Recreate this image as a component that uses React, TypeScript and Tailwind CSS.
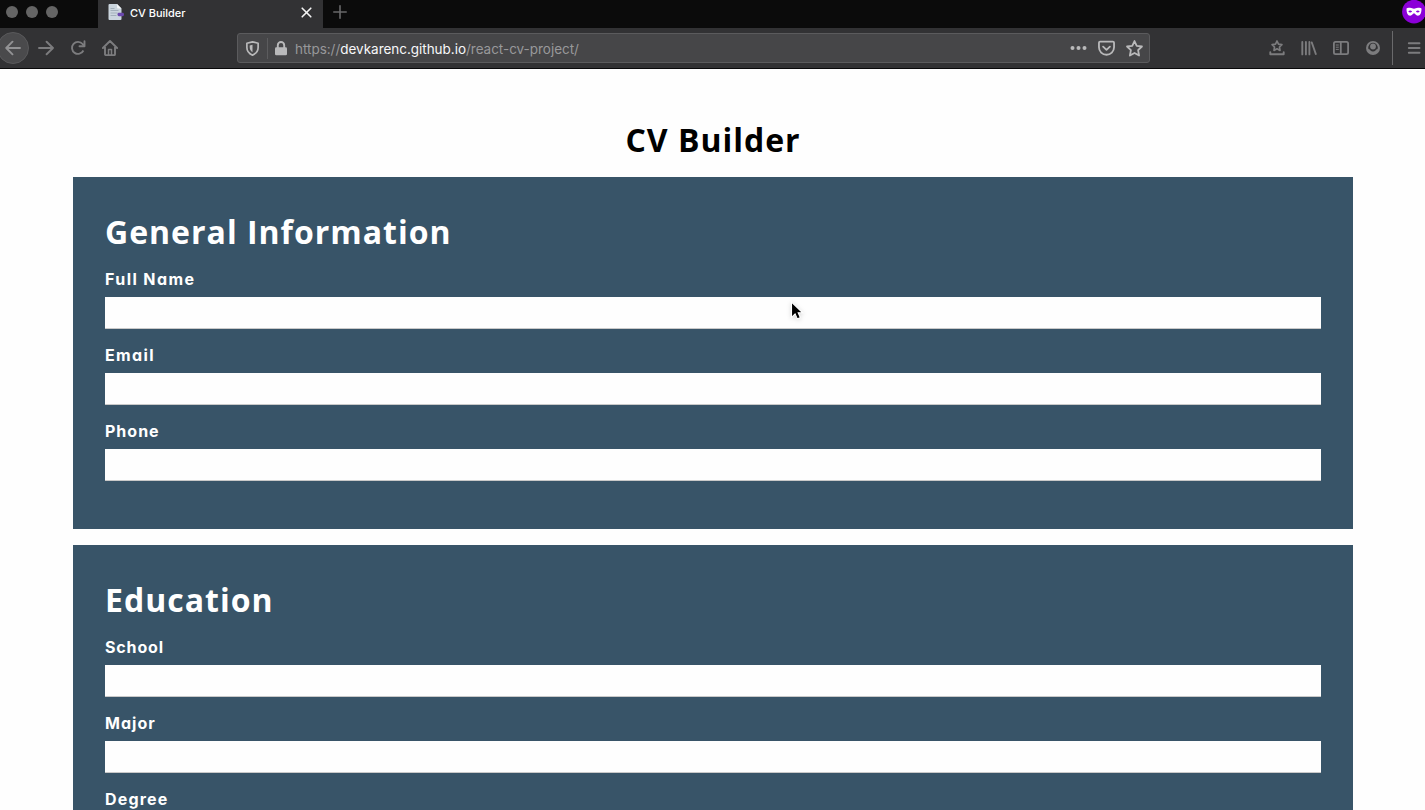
import React from "react";

function TabBar() {
  return (
    <div className="flex h-7 bg-[#0b0b0b]">
      <div className="flex w-[98px] gap-2 pl-1.5 pt-1.5">
        <span className="size-3 rounded-full bg-[#656565]" />
        <span className="size-3 rounded-full bg-[#656565]" />
        <span className="size-3 rounded-full bg-[#656565]" />
      </div>
      <div className="flex w-[225px] bg-[#323234] pl-2.5 text-white">
        <svg className="mt-1 size-4" viewBox="0 0 16 16">
          <path d="M1.5 0H9l4.5 4.5V15a1 1 0 0 1-1 1H1.5a1 1 0 0 1-1-1V1a1 1 0 0 1 1-1Z" fill="#cbd5de" />
          <path d="M9 0l4.5 4.5H10a1 1 0 0 1-1-1Z" fill="#f4f6f8" />
          <path d="M2.5 4.500h4M2.500 6.500h8M2.500 9h7M2.500 11.500h6" stroke="#a3b0bb" strokeWidth="1" />
          <rect x="9.500" y="8.800" width="6.500" height="3.400" rx="1.400" fill="#6b48ad" />
        </svg>
        <span className="ml-[6px] w-[170.5px] whitespace-nowrap pt-[5px] text-[11px] font-medium leading-4 tracking-[-0.03px]">CV Builder</span>
        <svg className="mt-[7px] size-[11px]" viewBox="0 0 11 11" fill="none" stroke="#f4f4f4" strokeWidth="1.600" strokeLinecap="round">
          <path d="M1.200 1.200l8.600 8.600M9.800 1.200l-8.600 8.600" />
        </svg>
      </div>
      <svg className="ml-[10px] mt-[5px] size-[14px]" viewBox="0 0 14 14" fill="none" stroke="#68686a" strokeWidth="1.600" strokeLinecap="round">
        <path d="M7 .8v12.400M.8 7h12.400" />
      </svg>
      <div className="ml-auto -mr-px h-6 w-6 shrink-0">
        <svg className="size-6" viewBox="0 0 24 24">
          <circle cx="12" cy="11.700" r="11.900" fill="#8b00d8" />
          <path d="M4.500 8.800C4.500 7.800 6 7.700 8 7.700c2 0 2.400 1 4 1s2-1 4-1 3.500.1 3.500 1.100c0 3.800-1.100 7-3.700 7-2 0-2.600-2.500-3.800-2.500s-1.800 2.500-3.800 2.500c-2.600 0-3.700-3.200-3.700-7Z" fill="white" />
          <path d="M6.300 11.600c1.200-1.500 2.700-1.500 3.800 0-1.100 1.200-2.600 1.200-3.800 0Zm7.600 0c1.200-1.500 2.700-1.500 3.800 0-1.200 1.200-2.700 1.200-3.800 0Z" fill="#8b00d8" />
        </svg>
      </div>
    </div>
  );
}

const iconProps = {
  viewBox: "0 0 16 16",
  fill: "none",
  stroke: "currentColor",
  strokeLinecap: "round" as const,
  strokeLinejoin: "round" as const,
};

function Toolbar() {
  return (
    <div className="flex h-[41px] items-center border-b border-[#09090a] bg-[#323234] text-[#7c7c7e]">
      <div className="-ml-[3px] flex size-8 items-center justify-center rounded-full border border-[#59595b] bg-[#4a4a4c] text-[#929294]">
        <svg className="size-4" {...iconProps} strokeWidth="1.900"><path d="M15 8H1.200M7.500 1.700L1.200 8l6.300 6.300" /></svg>
      </div>
      <svg className="ml-[9px] size-4" {...iconProps} strokeWidth="1.900"><path d="M1 8h14M8.600 1.700L15 8l-6.400 6.300" /></svg>
      <svg className="ml-4 size-4" {...iconProps} strokeWidth="1.900">
        <path d="M13.400 10.500A6 6 0 1 1 12.600 4l1.600 1.800" strokeLinecap="butt" />
        <path d="M14.500 1.300v5H9.500" />
      </svg>
      <svg className="ml-4 size-4" {...iconProps} strokeWidth="1.900">
        <path d="M.9 8L8 1l7.100 7M3 7v7.200a.9.900 0 0 0 .9.900h8.200a.9.900 0 0 0 .9-.9V7" />
        <path d="M6.500 15V9.500h3V15" strokeWidth="1.500" />
      </svg>
      <div className="ml-[119px] flex h-[30px] w-[913px] items-center rounded-[3px] border border-[#5b5b5d] bg-[#464648] text-[#b9b9ba]">
        <svg className="ml-[7px] size-[15px]" {...iconProps} strokeWidth="1.800">
          <path d="M8 .9l6 1.500v4.500c0 3.800-2.200 6.500-6 8.200-3.800-1.700-6-4.400-6-8.200V2.400Z" />
          <path d="M8 4v8c-2-1.200-3-3-3-5.500V4.700Z" fill="currentColor" stroke="none" />
        </svg>
        <span className="ml-[7px] h-[21px] w-px bg-[#5c5c5e]" />
        <svg className="ml-[6px] h-[15px] w-[14px]" viewBox="0 0 14 15">
          <path d="M3.800 7V4.200a3.200 3.200 0 0 1 6.400 0V7" fill="none" stroke="currentColor" strokeWidth="1.900" />
          <rect x="1" y="6.200" width="12" height="8" rx="1.300" fill="currentColor" />
        </svg>
        <span className="ml-[7px] whitespace-nowrap pt-px text-[13.5px] leading-5 tracking-[-0.03px] text-[#98989a]">
          https://<span className="text-[#f7f7f8]">devkarenc.github.io</span>/react-cv-project/
        </span>
        <div className="ml-auto mr-[6px] flex items-center">
          <svg className="h-4 w-[17px]" viewBox="0 0 17 16" fill="currentColor">
            <circle cx="2.500" cy="8" r="2" /><circle cx="8.500" cy="8" r="2" /><circle cx="14.500" cy="8" r="2" />
          </svg>
          <svg className="ml-[11px] size-[17px]" {...iconProps} strokeWidth="1.700">
            <path d="M2 1.500h12a1.100 1.100 0 0 1 1.100 1.100v4.200a7.100 7.100 0 0 1-14.200 0V2.600A1.100 1.100 0 0 1 2 1.500Z" />
            <path d="M4.800 6.200L8 9.300l3.200-3.100" />
          </svg>
          <svg className="ml-[11px] size-[17px]" {...iconProps} strokeWidth="1.700">
            <path d="M8 1l2.100 4.500 4.900.6-3.600 3.500.9 5L8 12.200l-4.300 2.400.9-5L1 6.100l4.900-.6Z" />
          </svg>
        </div>
      </div>
      <svg className="ml-[119px] size-4" {...iconProps} strokeWidth="1.700">
        <path d="M8 1l1.500 3.100 3.400.5-2.400 2.400.5 3.400L8 8.800 5 10.400 5.500 7 3.100 4.600l3.400-.5Z" />
        <path d="M1.300 12.300v1.900h13.400v-1.900" strokeWidth="1.900" />
      </svg>
      <svg className="ml-4 size-4" {...iconProps} strokeWidth="1.900">
        <path d="M1.300 2v12.400M4.900 2v12.400M8.400 2v12.400M10.800 2.500l4 11.500" />
      </svg>
      <svg className="ml-4 size-4" {...iconProps} strokeWidth="1.800">
        <rect x=".9" y="1.800" width="14.200" height="12.400" rx="1.600" /><path d="M7.800 2v12" />
        <path d="M3.200 5h2.200M3.200 7.200h2.200M3.200 9.400h2.200" strokeWidth="1" />
      </svg>
      <svg className="ml-4 size-4" viewBox="0 0 16 16">
        <circle cx="8" cy="8" r="7" fill="currentColor" />
        <path d="M3.400 9A5 5 0 0 1 8 2.700 5 5 0 0 1 12.600 9c-1 .2-1.500.6-2.100 1.400-1.200 1.500-3.800 1.500-5 0C4.900 9.600 4.400 9.200 3.400 9Z" fill="#323234" />
        <circle cx="8" cy="6.500" r="2.900" fill="currentColor" />
      </svg>
      <span className="ml-[11px] h-[34px] w-px bg-[#6a6a6c]" />
      <svg className="ml-[14px] size-[14px] shrink-0" viewBox="0 0 14 14" fill="none" stroke="currentColor" strokeWidth="1.900" strokeLinecap="round">
        <path d="M1.800 2.200h10.700M1.800 7h10.700M1.800 11.800h10.700" />
      </svg>
    </div>
  );
}

function Field({ label, spacing }: { label: string; spacing: string }) {
  return (
    <label className="block h-[76px]">
      <span className={`block h-7 text-[16px] font-bold leading-5 text-white [font-feature-settings:'cv11'] ${spacing}`}>{label}</span>
      <input className="block h-8 w-full border-b border-[#c9c9c9] bg-[#fefefe] px-2 text-base text-black outline-none" />
    </label>
  );
}

function Section({ title, children }: { title: string; children: React.ReactNode }) {
  return (
    <section className="h-[352px] bg-[#385468] px-8 pt-8">
      <h2 className="mb-[15px] font-['Open_Sans',sans-serif] text-[32px] font-bold leading-[45px] tracking-[1px] text-white">{title}</h2>
      {children}
    </section>
  );
}

export default function App() {
  return (
    <div className="relative h-[810px] overflow-hidden bg-[#fefefe] font-['Inter',sans-serif]">
      <TabBar />
      <Toolbar />
      <main className="ml-[73px] w-[1280px] pt-12">
        <h1 className="mb-[15px] text-center font-['Open_Sans',sans-serif] text-[32px] font-bold leading-[45px] tracking-[1px] text-black">CV Builder</h1>
        <div className="flex flex-col gap-4">
          <Section title="General Information">
            <Field label="Full Name" spacing="tracking-[1.42px]" />
            <Field label="Email" spacing="tracking-[1.4px]" />
            <Field label="Phone" spacing="tracking-[1px]" />
          </Section>
          <Section title="Education">
            <Field label="School" spacing="tracking-[0.85px]" />
            <Field label="Major" spacing="tracking-[1.05px]" />
            <Field label="Degree" spacing="tracking-[1.2px]" />
          </Section>
        </div>
      </main>
      <svg className="absolute left-[788px] top-[299px] h-[24px] w-[18px] drop-shadow-sm" viewBox="0 0 18 24">
        <path d="M3.500 3v15.300l3.600-3.400 2.200 5 3-1.300-2.100-4.800h4.500Z" fill="black" stroke="white" strokeWidth="1.100" />
      </svg>
    </div>
  );
}
